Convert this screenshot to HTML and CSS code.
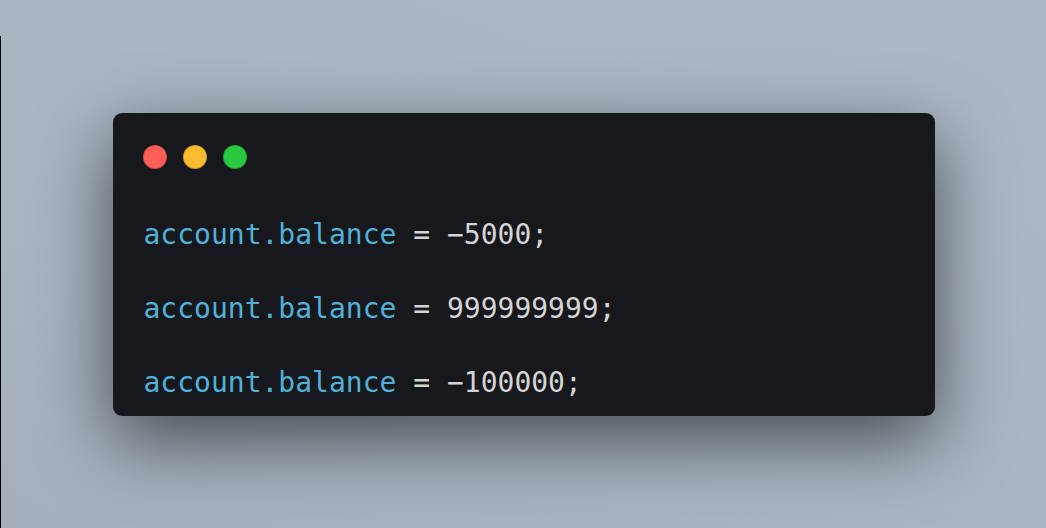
FILE: index.html
```html
<!DOCTYPE html>
<html>
<head>
<meta charset="utf-8">
<link rel="stylesheet" href="styles.css">
</head>
<body>
<div class="stage">
  <div class="window">
    <div class="lights">
      <span class="dot red"></span>
      <span class="dot yellow"></span>
      <span class="dot green"></span>
    </div>
    <div class="code">
      <div class="line"><span class="prop">account.balance</span> = −5000;</div>
      <div class="line"><span class="prop">account.balance</span> = 999999999;</div>
      <div class="line"><span class="prop">account.balance</span> = −100000;</div>
    </div>
  </div>
</div>
</body>
</html>
```

FILE: styles.css
```css
html, body {
  margin: 0;
  padding: 0;
}
body {
  background: #aab6c1;
}
.stage {
  box-sizing: border-box;
  height: 528px;
  padding-left: 1px;
  display: grid;
  place-items: center;
  background-color: #aab6c1;
  background-image:
    linear-gradient(#000, #000),
    linear-gradient(200deg, #acb9c4 0%, #a8b4bf 60%, #a4afba 100%);
  background-size: 1px calc(100% - 36px), 100% 100%;
  background-position: left bottom, 0 0;
  background-repeat: no-repeat;
}
.window {
  box-sizing: border-box;
  width: 822px;
  height: 303px;
  background: #17181b;
  border-radius: 9px;
  padding: 32px 30px 15px;
  box-shadow: 0 24px 72px rgba(0, 0, 0, 0.58);
  display: flex;
  flex-direction: column;
}
.lights {
  display: flex;
  gap: 16px;
  height: 24px;
}
.dot {
  box-sizing: border-box;
  width: 24px;
  height: 24px;
  border-radius: 50%;
  border: 1px solid rgba(0, 0, 0, 0.18);
}
.red { background: #ff5f57; }
.yellow { background: #febc2e; }
.green { background: #28c840; }
.code {
  margin-top: 47px;
  padding-left: 1px;
  display: flex;
  flex-direction: column;
  gap: 37px;
  font-family: "DejaVu Sans Mono", monospace;
  font-size: 28px;
  line-height: 37px;
  color: #d4d4d4;
  white-space: pre;
}
.prop {
  color: #4fb1d9;
}
```
